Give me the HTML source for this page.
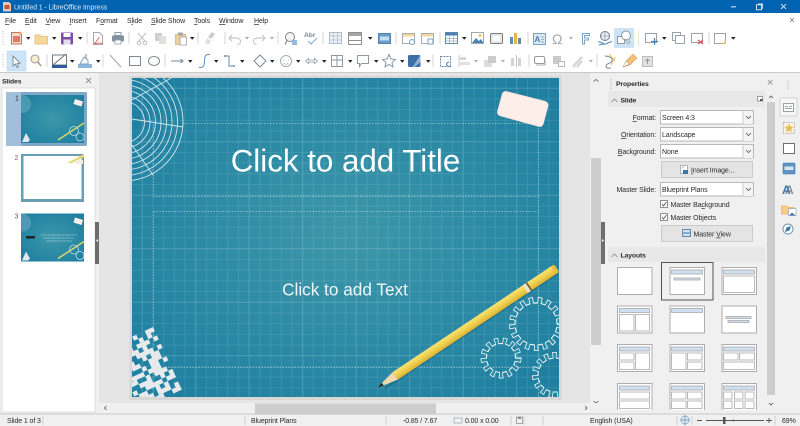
<!DOCTYPE html>
<html><head><meta charset="utf-8"><title>LibreOffice Impress</title>
<style>
html,body{margin:0;padding:0;background:#f0f0f0;width:800px;height:426px;overflow:hidden}
svg{display:block}
text{font-family:"Liberation Sans",sans-serif;font-size:7px;letter-spacing:-.1px;fill:#2a2a2a}
.b{font-weight:bold;font-size:6.8px;letter-spacing:-.1px}
.u{text-decoration:underline}
.ic{fill:none;stroke:#6f7f8c;stroke-width:1}
.g{fill:none;stroke:#b9bfc4;stroke-width:1}
.bl{fill:none;stroke:#3f78a8;stroke-width:1}
.lt{fill:#fff;stroke:#adadad;stroke-width:1}
.lh{fill:#cfe0f2;stroke:#a9a9a9;stroke-width:.8}
.lb{fill:#fff;stroke:#a9a9a9;stroke-width:.8}
.cb{fill:#fff;stroke:#a8a8a8;stroke-width:.8}
</style></head><body>
<svg width="800" height="426" viewBox="0 0 800 426" xmlns="http://www.w3.org/2000/svg">
<defs>
<path id="a" d="M0 0h4.500l-2.250 2.800z" fill="#222"/>
<path id="ag" d="M0 0h4l-2 2.500z" fill="#aaa"/>
<radialGradient id="sbg" cx="50%" cy="50%" r="62%"><stop offset="0" stop-color="#3d97a9"/><stop offset="1" stop-color="#1f80a1"/></radialGradient>
<pattern id="grid" x="132" y="78" width="10.7" height="10.7" patternUnits="userSpaceOnUse"><path d="M10.2 0v10.7M0 10.2h10.7" stroke="#fff" stroke-opacity=".12" stroke-width=".8" fill="none"/></pattern>
<pattern id="gridM" x="132" y="78" width="53.5" height="53.5" patternUnits="userSpaceOnUse"><path d="M10.2 0v53.5M0 10.2h53.5" stroke="#fff" stroke-opacity=".09" stroke-width="1" fill="none"/></pattern>
<clipPath id="sc"><rect x="132" y="78" width="427" height="319"/></clipPath>
<clipPath id="lay"><rect x="608" y="262" width="158" height="148"/></clipPath>
<linearGradient id="pen" x1="0" y1="0" x2="0" y2="1"><stop offset="0" stop-color="#f5e27a"/><stop offset=".45" stop-color="#f2d350"/><stop offset="1" stop-color="#dcb035"/></linearGradient>
<clipPath id="tc"><rect width="63" height="48"/></clipPath>
<g id="thumb"><rect width="63" height="48" fill="url(#sbg)"/><g clip-path="url(#tc)"><circle cx="1" cy="9" r="9" fill="#7fb6c6" opacity=".45"/><path d="M54 4l8 2.500-1.500 5-8-2.500z" fill="#fdeee9"/><path d="M37 45L63 28" stroke="#d9d76a" stroke-width="1.500"/><circle cx="53" cy="36" r="4.500" fill="none" stroke="#bfdde3" stroke-width=".8"/><circle cx="59" cy="42" r="4" fill="none" stroke="#bfdde3" stroke-width=".8"/><circle cx="50" cy="41" r="0" /><path d="M1 47l4-9 4 7-2 2z" fill="#dfe8ea"/></g></g>
</defs>

<!-- window base -->
<rect width="800" height="426" fill="#f0f0f0"/>
<rect width="800" height="13" fill="#0063b1"/>
<rect y="13" width="800" height="59" fill="#fff"/>
<rect y="72" width="800" height="1.2" fill="#c9c9c9"/>

<!-- title bar -->
<path d="M3 2h6l2 2v7.500H3z" fill="#e8c8b8"/><rect x="4.500" y="5" width="5" height="4" fill="#c9552f"/>
<text x="14" y="9.500" style="fill:#dbe8f5">Untitled 1 - LibreOffice Impress</text>
<rect x="731" y="6.400" width="5" height=".9" fill="#fff"/>
<rect x="756.500" y="4.800" width="5" height="5" fill="none" stroke="#fff" stroke-width=".8"/><path d="M758 4h4.700v4.700" fill="none" stroke="#fff" stroke-width=".7"/>
<path d="M781 4l5 5M786 4l-5 5" stroke="#fff" stroke-width=".8"/>

<!-- menu -->
<text x="5" y="23"><tspan class="u">F</tspan>ile</text>
<text x="25" y="23"><tspan class="u">E</tspan>dit</text>
<text x="45.500" y="23"><tspan class="u">V</tspan>iew</text>
<text x="69.500" y="23"><tspan class="u">I</tspan>nsert</text>
<text x="96" y="23">F<tspan class="u">o</tspan>rmat</text>
<text x="127" y="23">S<tspan class="u">l</tspan>ide</text>
<text x="151" y="23"><tspan class="u">S</tspan>lide Show</text>
<text x="194" y="23"><tspan class="u">T</tspan>ools</text>
<text x="219" y="23"><tspan class="u">W</tspan>indow</text>
<text x="254" y="23"><tspan class="u">H</tspan>elp</text>
<path d="M790 18l4 4M794 18l-4 4" stroke="#777" stroke-width=".7"/>

<!-- toolbar grips -->
<path d="M3 31v14M3 54v14" stroke="#bbb" stroke-dasharray="1 1.500"/>

<!-- separators -->
<g stroke="#d5d5d5" stroke-width="1">
<path d="M87 32v12M129 32v12M198 32v12M225 32v12M278 32v12M323 32v12M396 32v12M440 32v12M528 32v12M709 32v12"/>
<path d="M47 54v13M103 54v13M165 54v13M433 54v13M529 54v13M597 54v13"/>
</g>

<!-- toolbar 1 -->
<path d="M11.500 32.500h8l2 2v9.500h-10z" fill="#f4d9cf" stroke="#c9705f"/><rect x="13" y="36" width="7" height="6" fill="#e07a66"/><circle cx="20" cy="33" r="1.400" fill="#e8a33d"/>
<use href="#a" x="26" y="37"/>
<path d="M35 35h5l1.500 1.500h6v7.500h-12.500z" fill="#f3d79c" stroke="#ecc681"/>
<use href="#a" x="52" y="37"/>
<rect x="61" y="32.500" width="12" height="12" rx="1" fill="#7b4fa8"/><rect x="63.500" y="33" width="7" height="4" fill="#fff"/><rect x="63.500" y="39.500" width="7" height="5" fill="#e4dbee"/>
<use href="#a" x="78" y="37"/>
<path d="M93.500 32.500h6l3 3v9h-9z" fill="#fff" stroke="#a5a9ad"/><path d="M99 37c-1 3-3 5-5 7 3-1 6-1 9-.500" fill="none" stroke="#d4705f" stroke-width="1"/>
<path d="M115 32.500h6v3h-6z" fill="#fff" stroke="#8f9ca7"/><rect x="112" y="35.500" width="12" height="6" rx="1" fill="#82919f"/><rect x="115" y="40" width="6" height="4" fill="#fff" stroke="#8f9ca7" stroke-width=".8"/>
<path d="M138 33l7 8M146 33l-7 8" class="g"/><circle cx="139" cy="43" r="1.800" class="g"/><circle cx="145" cy="43" r="1.800" class="g"/>
<rect x="155" y="33" width="7" height="8" fill="#cfcfcf"/><rect x="159" y="36" width="7" height="8" fill="#dfdfdf"/>
<rect x="175.500" y="34.500" width="10" height="10" fill="#ecd09e" stroke="#dcbd8a"/><rect x="178" y="32.500" width="5" height="3" fill="#a5a5a5"/><rect x="180" y="37" width="6.500" height="8" fill="#fff" stroke="#a0a0a0" stroke-width=".8"/>
<use href="#a" x="190" y="37"/>
<path d="M212 32l3 2-4 5-3-2z" fill="#cbcbcb"/><path d="M207 38l4 3-2 3h-4z" fill="#dedede"/>
<path d="M232 35l-3 3 3 3M229.500 38h7c3 0 4 2 4 3.500s-1 3-3 3" class="g" stroke-width="1.200"/>
<use href="#ag" x="245" y="37"/>
<path d="M262 35l3 3-3 3M264.500 38h-7c-3 0-4 2-4 3.500s1 3 3 3" class="g" stroke-width="1.200"/>
<use href="#ag" x="270" y="37"/>
<circle cx="290" cy="37" r="4.500" fill="#f4f4f4" stroke="#858585"/><path d="M287 40.500l-2 4" stroke="#858585" stroke-width="1.200"/><rect x="292" y="40" width="5" height="5" fill="#7dafdc" opacity=".85"/>
<text x="304" y="37" class="b" style="fill:#7b8893">Abr</text><path d="M308 41l3 3 6-6" fill="none" stroke="#8fb2d0" stroke-width="1.200"/>
<rect x="329.500" y="32.500" width="12" height="11" fill="#eef2f6" stroke="#adbdcb"/><path d="M333.500 32.500v11M337.500 32.500v11M329.500 36h12M329.500 40h12" stroke="#adbdcb" stroke-width=".7"/>
<rect x="348.500" y="32.500" width="13" height="12" fill="#fff" stroke="#8f8f8f"/><rect x="349" y="33" width="12" height="3" fill="#a5a5a5"/><path d="M349 40.500h12" stroke="#8f8f8f"/>
<use href="#a" x="368" y="37"/>
<rect x="378.500" y="33.500" width="12" height="10" fill="#6a9cc9" stroke="#5585ae"/><rect x="380" y="36.500" width="9" height="4" fill="#c6dcf0"/>
<rect x="402.500" y="33.500" width="12" height="10" fill="#fff" stroke="#a5aeb6"/><rect x="403" y="34" width="11" height="2.500" fill="#f3d79c"/><circle cx="412" cy="42" r="2.500" fill="#fff" stroke="#7aa2c2"/>
<rect x="421.500" y="33.500" width="12" height="10" fill="#fff" stroke="#a5aeb6"/><rect x="422" y="34" width="11" height="2.500" fill="#f3d79c"/><rect x="428" y="39" width="5" height="5" fill="#fff" stroke="#7aa2c2"/>
<rect x="445.500" y="32.500" width="12" height="11" fill="#fff" stroke="#6b8aa6"/><rect x="445.500" y="32.500" width="12" height="3" fill="#4a83b5"/><path d="M449.500 35v8M453.500 35v8M446 38.500h11M446 41h11" stroke="#98a9b7" stroke-width=".7"/>
<use href="#a" x="462" y="37"/>
<rect x="471.500" y="32.500" width="12" height="11" fill="#fff" stroke="#a0a9b0"/><circle cx="480" cy="35.500" r="1.500" fill="#f2c35c"/><path d="M472 43l4-5 3 3 2-2 2.500 4z" fill="#4a83b5"/>
<rect x="490.500" y="33.500" width="12" height="10" rx="1" fill="#fff" stroke="#7c7c7c"/><rect x="492" y="35" width="9" height="7" fill="none" stroke="#d0d0d0"/>
<rect x="510" y="37" width="3" height="7" fill="#5590bf"/><rect x="514" y="33" width="3" height="11" fill="#e9b44c"/><rect x="518" y="38" width="3" height="6" fill="#6a889f"/>
<rect x="533.500" y="33.500" width="12" height="11" fill="#dbe8f4" stroke="#7aa2c2"/><text x="534.500" y="42" class="b" style="fill:#4a83b5;font-size:8px">A</text><path d="M541 37h3M541 39.500h3M541 42h3" stroke="#7aa2c2" stroke-width=".7"/>
<text x="552" y="44" style="font-size:14px;letter-spacing:0;fill:#a0a8b0">Ω</text>
<use href="#ag" x="569" y="37"/>
<path d="M582.500 33.500h7v2h-5v2.500h4v2h-4v4h-2z" fill="#fff" stroke="#7aa5cb"/>
<circle cx="605" cy="36" r="4.500" fill="#eef2f6" stroke="#6f7f8e"/><path d="M600.500 36h9M605 31.500v9" stroke="#6f7f8e" stroke-width=".6"/><path d="M598 42c3-1 4 2 7 2s4-3 7-2M599 45c3-1 4-1 6-1" fill="none" stroke="#4a83b5" stroke-width="1"/>
<rect x="614" y="28" width="20" height="20" fill="#cde4f7"/>
<rect x="617.500" y="36.500" width="7" height="7" fill="#fff" stroke="#8c99a4"/><circle cx="626" cy="35.500" r="4.500" fill="#fff" stroke="#8c99a4"/><path d="M625 39l3 5 2-2z" fill="#f3f3f3" stroke="#8c99a4" stroke-width=".7"/>
<path d="M638.500 30v16" stroke="#e0d9a0" stroke-dasharray="1 1"/>
<rect x="645.500" y="33.500" width="11" height="9" fill="#fff" stroke="#99a2a9"/><path d="M654.500 38v7M651 41.500h7" stroke="#4a83b5" stroke-width="1.200"/>
<use href="#a" x="662" y="37"/>
<rect x="672.500" y="32.500" width="8" height="8" fill="#fff" stroke="#99a2a9"/><rect x="675.500" y="35.500" width="9" height="8" fill="#fff" stroke="#99a2a9"/>
<rect x="691.500" y="33.500" width="11" height="9" fill="#fff" stroke="#99a2a9"/><path d="M698 40l5 4M703 40l-5 4" stroke="#d8545c" stroke-width="1.200"/>
<rect x="714.500" y="33.500" width="11" height="10" fill="#fff" stroke="#99a2a9"/><path d="M722 44l4-4v4z" fill="#eec06b"/>
<use href="#a" x="731" y="37"/>

<!-- toolbar 2 -->
<rect x="7" y="51" width="19" height="20" fill="#cde4f7" stroke="#b7d7f0" stroke-width=".6"/>
<path d="M13 56v10l2.500-2 1.500 3.500 1.500-.7-1.500-3.300 3.200-.3z" fill="#fff" stroke="#7c8692" stroke-width=".9"/>
<circle cx="35" cy="59" r="4" fill="#f7ecd2" stroke="#9d9d9d"/><path d="M38 62l3 4" stroke="#a88a60" stroke-width="1.400"/>
<path d="M53 65l13-11" stroke="#666" stroke-width=".9"/><rect x="52.500" y="55" width="14" height="10" fill="none" stroke="#6b7a86"/><rect x="52" y="65" width="15" height="3" fill="#2e5a9c"/>
<use href="#a" x="70" y="60"/>
<rect x="78" y="64" width="14" height="4" fill="#8fb6da"/><path d="M80 64l4-7 4 3v4z" fill="#fff" stroke="#7aa2c2"/><path d="M86 54v5" stroke="#7c8692"/>
<use href="#a" x="96" y="60"/>
<path d="M110 55l11 12" stroke="#9ca6af"/>
<rect x="129.500" y="56.500" width="11" height="9" fill="#fff" stroke="#7d8993"/>
<ellipse cx="154" cy="61" rx="5.500" ry="4.500" fill="#fff" stroke="#7d8993"/>
<path d="M171 61h12M180.500 59l2.500 2-2.500 2" fill="none" stroke="#6f899f"/>
<use href="#a" x="188" y="60"/>
<path d="M199 67c1 1 4 1 5-2s0-5 1-8 4-3 5-2" fill="none" stroke="#5f93bd" stroke-width="1"/>
<use href="#a" x="214" y="60"/>
<path d="M225 56h4v10h5" fill="none" stroke="#6f899f"/><circle cx="225" cy="56" r="1" fill="#5f93bd"/><circle cx="234" cy="66" r="1" fill="#5f93bd"/>
<use href="#a" x="240" y="60"/>
<path d="M260 55l6 6-6 6-6-6z" fill="#fff" stroke="#7d8993"/>
<use href="#a" x="270" y="60"/>
<circle cx="286" cy="61" r="5.500" fill="#fff" stroke="#a5aeb5"/><path d="M283 60h1M288 60h1M283.500 63c1.500 1.500 3.500 1.500 5 0" fill="none" stroke="#a5aeb5" stroke-width=".8"/>
<use href="#a" x="296" y="60"/>
<path d="M305.500 61l3-2.500v1.500h6v-1.500l3 2.500-3 2.500v-1.500h-6v1.500z" fill="#fff" stroke="#8c98a2" stroke-width=".8"/>
<use href="#a" x="322" y="60"/>
<rect x="331.500" y="55.500" width="11" height="11" fill="#fff" stroke="#8c98a2"/><path d="M337 55.500v11M331.500 60h11" stroke="#8c98a2"/>
<use href="#a" x="348" y="60"/>
<path d="M357.500 55.500h11v8h-7l-2 3v-3h-2z" fill="#fff" stroke="#8c98a2"/>
<use href="#a" x="374" y="60"/>
<path d="M389 54.500l2 4.500 4.500.5-3.500 3 1 4.500-4-2.500-4 2.500 1-4.500-3.500-3 4.500-.5z" fill="#fff" stroke="#8c98a2"/>
<use href="#a" x="400" y="60"/>
<rect x="408" y="55" width="12.500" height="12" rx="1.500" fill="#3c6ea8"/><path d="M420.500 55v7l-6 5h-2z" fill="#a8c3de" opacity=".8"/>
<use href="#a" x="426" y="60"/>
<rect x="440.500" y="56.500" width="10" height="10" fill="none" stroke="#6f899f" stroke-dasharray="2 1"/><path d="M449 62c-2 0-3 2-2 3.500s3 1.500 4 0" fill="none" stroke="#4a83b5" stroke-width="1.100"/>
<path d="M459 55v12" stroke="#c8c8c8"/><rect x="460" y="57" width="6" height="3" fill="#d6d6d6"/><rect x="460" y="62" width="10" height="3" fill="#e0e0e0"/>
<use href="#ag" x="474" y="60"/>
<rect x="484" y="60" width="8" height="7" fill="#dedede"/><rect x="488" y="56" width="8" height="7" fill="#cbcbcb"/>
<use href="#ag" x="501" y="60"/>
<rect x="511" y="58" width="3" height="8" fill="#d4d4d4"/><rect x="518" y="58" width="3" height="8" fill="#d4d4d4"/><path d="M516.500 55v12" stroke="#c4c4c4"/>
<rect x="534.500" y="56.500" width="10" height="7" rx="1.500" fill="#fff" stroke="#999"/><path d="M536 65h9v-5" fill="none" stroke="#b0b0b0" stroke-width="1.100"/>
<rect x="553" y="56" width="8" height="8" fill="#cbcbcb"/><rect x="558.500" y="61.500" width="6" height="5" fill="#fff" stroke="#b8b8b8"/>
<path d="M572 66l9-10 2 2-9 10z" fill="#d9d9d9"/><path d="M577 67l5-6" stroke="#c8c8c8" stroke-width="1.400"/>
<use href="#ag" x="589" y="60"/>
<path d="M605 56c4 0 8 2 7 5s-6 2-6 5 3 2 5 2" fill="none" stroke="#6f899f"/><path d="M609 54l6 7M615 57l-4 8" stroke="#eec06b" stroke-width="1"/>
<path d="M623 67l3-6 7-7 4 4-7 7z" fill="#eec078" stroke="#d6a65b" stroke-width=".6"/><path d="M623 67l3-6 3 3z" fill="#fff" stroke="#999" stroke-width=".5"/>
<rect x="642.500" y="56.500" width="10" height="10" fill="#e2e2e2" stroke="#bbb"/><path d="M647.500 64v-5M645.500 61l2-2 2 2" fill="none" stroke="#969696"/>

<!-- left slide panel -->
<rect x="0" y="73" width="99" height="341" fill="#f0f0f0"/>
<rect x="2" y="88" width="93" height="324" fill="#fff" stroke="#cfcfcf" stroke-width=".6"/>
<text x="2" y="83.500" class="b">Slides</text>
<path d="M86 78l5 5M91 78l-5 5" stroke="#777" stroke-width=".8"/>
<rect x="6" y="92" width="81" height="54" rx="1" fill="#7fa7c6"/>
<rect x="6" y="92" width="15" height="54" fill="#9fbfdc"/>
<text x="15" y="100.500" style="fill:#333">1</text>
<use href="#thumb" x="21" y="95"/>
<text x="14.500" y="160" style="fill:#8c5b7d">2</text>
<rect x="21" y="154" width="63" height="48" fill="#6a9eb4"/>
<rect x="23.500" y="156" width="58" height="43" fill="#fff"/>
<path d="M67 163l17-9v3l-12 6z" fill="#e6da70"/><rect x="76" y="160" width="7" height="4" fill="#f3ece8"/>
<text x="14.500" y="218.500" style="fill:#555">3</text>
<use href="#thumb" x="21" y="213.500"/>
<rect x="26" y="236" width="9" height="2.500" fill="#222"/>
<path d="M41 235h36M43 238h31M46 241h26" stroke="#e8f2f4" stroke-width=".6" stroke-dasharray="1.500 .7"/>
<rect x="95" y="222" width="4" height="42" fill="#6e6e6e"/><path d="M98 239l-2 1.500 2 1.500z" fill="#fff"/>

<!-- editor -->
<rect x="99" y="73" width="491" height="330" fill="#e5e5e5"/>
<rect x="129.500" y="76" width="432" height="324" fill="#c8c5c0" opacity=".45"/>
<rect x="132" y="78" width="427" height="319" fill="url(#sbg)"/>
<rect x="132" y="78" width="427" height="319" fill="url(#grid)"/>
<rect x="132" y="78" width="427" height="319" fill="url(#gridM)"/>
<g clip-path="url(#sc)">
<g fill="none" stroke="#d0e7ed" stroke-width=".9">
<circle cx="124" cy="122" r="59"/><circle cx="124" cy="122" r="53.500"/><circle cx="124" cy="122" r="48"/><circle cx="124" cy="122" r="42.500"/><circle cx="124" cy="122" r="37"/><circle cx="124" cy="122" r="31.500"/><circle cx="124" cy="122" r="26"/><circle cx="124" cy="122" r="20.500"/>
<path d="M132 119l51 8M132 100l41-23M132 145l21 30"/>
</g>
<g fill="none" stroke="#e4eef1" stroke-opacity=".65" stroke-width=".7" stroke-dasharray="1.500 1.500">
<path d="M183 123.500h355.500V397M153.500 124v72.500h385M153.500 211.500h385M153.500 211.500V397M153.500 367.500h385"/>
</g>
<!-- QR block -->
<g transform="translate(153 327) rotate(-24.7) translate(-46 0) scale(4.600)" fill="#e6eaec">
<path d="M5 0h1v1h-1zM8 0h2v1h-2zM3 1h1v1h-1zM6 1h1v1h-1zM8 1h1v1h-1zM1 2h3v1h-3zM5 2h3v1h-3zM9 2h1v1h-1zM0 3h2v1h-2zM3 3h2v1h-2zM6 3h1v1h-1zM1 4h1v1h-1zM4 4h4v1h-4zM9 4h1v1h-1zM0 5h3v1h-3zM5 5h1v1h-1zM7 5h2v1h-2zM2 6h2v1h-2zM6 6h3v1h-3zM0 7h1v1h-1zM4 7h1v1h-1zM6 7h2v1h-2zM9 7h1v1h-1zM1 8h3v1h-3zM5 8h3v1h-3zM0 9h2v1h-2zM4 9h1v1h-1zM6 9h3v1h-3zM2 10h3v1h-3zM7 10h1v1h-1zM9 10h1v1h-1zM0 11h1v1h-1zM3 11h4v1h-4zM8 11h2v1h-2zM1 12h2v1h-2zM5 12h1v1h-1zM7 12h1v1h-1zM0 13h4v1h-4zM5 13h3v1h-3zM9 13h1v1h-1zM2 14h1v1h-1zM4 14h2v1h-2zM8 14h2v1h-2z"/>
</g>
<!-- gears -->
<g fill="none">
<g transform="translate(536 324)">
<circle r="24" pathLength="34" stroke="#fff" stroke-width="6" stroke-dasharray="1 1"/>
<circle r="23.400" pathLength="34" stroke="#2a8aa3" stroke-width="5.800" stroke-dasharray=".65 1.350" stroke-dashoffset="-.175"/>
<circle r="21" pathLength="34" stroke="#fff" stroke-width="1" stroke-dasharray="1.250 .750" stroke-dashoffset="-.875"/>
</g>
<g transform="translate(501 358)">
<circle r="17.500" pathLength="26" stroke="#fff" stroke-width="6" stroke-dasharray="1 1"/>
<circle r="16.900" pathLength="26" stroke="#2a8aa3" stroke-width="5.800" stroke-dasharray=".65 1.350" stroke-dashoffset="-.175"/>
<circle r="14.500" pathLength="26" stroke="#fff" stroke-width="1" stroke-dasharray="1.250 .750" stroke-dashoffset="-.875"/>
</g>
<g transform="translate(555 375)">
<circle r="20" pathLength="30" stroke="#fff" stroke-width="6" stroke-dasharray="1 1"/>
<circle r="19.400" pathLength="30" stroke="#2a8aa3" stroke-width="5.800" stroke-dasharray=".65 1.350" stroke-dashoffset="-.175"/>
<circle r="17" pathLength="30" stroke="#fff" stroke-width="1" stroke-dasharray="1.250 .750" stroke-dashoffset="-.875"/>
</g>
</g>
<!-- pencil -->
<g transform="translate(377 388) rotate(-33.700)">
<rect x="6" y="3.500" width="208" height="2.500" fill="#0a3a50" opacity=".25"/>
<path d="M0 0L22-4.600V4.600z" fill="#efd9ae"/>
<path d="M0 0l7-1.500v3z" fill="#222"/>
<rect x="22" y="-4.600" width="192" height="9.200" fill="url(#pen)"/>
<rect x="178" y="-4.600" width="4" height="9.200" fill="#e8e3c8"/>
<rect x="182" y="-4.600" width="1.500" height="9.200" fill="#6b5324"/>
<rect x="212" y="-4.600" width="4" height="9.200" rx="2" fill="#e6bf3f"/>
</g>
<!-- eraser -->
<path d="M507 91.500l37.500 9.500q4.500 1.200 3.500 5.500l-4.500 17q-1.200 4-5 3l-38-10.500q-4-1.200-3-5l4.500-16.500q1-4 5-3z" fill="#fdeee9" stroke="#e8d5d0" stroke-width=".5"/>
</g>
<text x="345.500" y="171.500" text-anchor="middle" style="font-size:31.300px;letter-spacing:0;fill:#fff">Click to add Title</text>
<text x="345" y="295.500" text-anchor="middle" style="font-size:17.200px;letter-spacing:0;fill:#eef6f8">Click to add Text</text>

<!-- v scrollbar -->
<rect x="590" y="73" width="11" height="330" fill="#f0f0f0"/>
<rect x="591" y="158" width="10" height="187" fill="#cdcdcd"/>
<path d="M593.500 81.500l2.500-2 2.500 2M593.500 401l2.500 2 2.500-2" fill="none" stroke="#555" stroke-width=".8"/>
<rect x="601" y="222" width="4" height="42" fill="#6e6e6e"/><path d="M602 239l2 1.500-2 1.500z" fill="#fff"/>
<!-- h scrollbar -->
<rect x="99" y="403" width="502" height="10.500" fill="#f0f0f0"/>
<rect x="255" y="403.500" width="181" height="10" fill="#cdcdcd"/>
<path d="M106.500 406l-2 2 2 2M585 406l2 2-2 2" fill="none" stroke="#555" stroke-width=".8"/>

<!-- status bar -->
<rect y="413.500" width="800" height="1" fill="#c9c9c9"/>
<rect y="414.500" width="800" height="11.500" fill="#f0f0f0"/>
<g stroke="#cfcfcf"><path d="M43 416v9M245 416v9M386 416v9M511 416v9M524 416v9M543 416v9M677 416v9M692 416v9M775 416v9"/></g>
<text x="7" y="423">Slide 1 of 3</text>
<text x="251" y="423">Blueprint Plans</text>
<text x="403" y="423">-0.85 / 7.67</text>
<path d="M454 418h8v5h-8z" fill="none" stroke="#9ba8b2" stroke-width=".7"/>
<text x="465" y="423">0.00 x 0.00</text>
<rect x="516.500" y="417" width="6" height="6.500" fill="none" stroke="#8a8a8a" stroke-width=".7"/><rect x="518" y="417" width="3" height="2" fill="#8a8a8a"/>
<text x="590" y="423">English (USA)</text>
<circle cx="685" cy="420" r="4" fill="#e4eef6" stroke="#7fa7c6" stroke-width=".7"/><path d="M680 420h10M685 415v10" stroke="#5d8db5" stroke-width=".7"/>
<path d="M697 420.500h5M706 420.500h58M766 420.500h6M769 418v5" stroke="#555" stroke-width=".9"/>
<rect x="723" y="417" width="2.500" height="7" fill="#555"/><rect x="733" y="419.500" width="1" height="2" fill="#555"/>
<text x="782" y="423">69%</text>

<!-- properties deck -->
<rect x="605" y="73" width="172" height="340.500" fill="#f0f0f0"/>
<path d="M611 79v11" stroke="#aaa" stroke-dasharray="1 1.300"/>
<text x="616" y="86" class="b">Properties</text>
<path d="M768 80l4.500 4.500M772.500 80l-4.500 4.500" stroke="#888" stroke-width=".8"/>
<rect x="608" y="91" width="157" height="16" fill="#e8e8e8"/>
<rect x="767" y="91" width="8" height="322" fill="#f0f0f0"/>
<rect x="767" y="102" width="8" height="293" fill="#cdcdcd"/>
<path d="M769 98l2-2 2 2M769 403l2 2 2-2" fill="none" stroke="#555" stroke-width=".8"/>
<path d="M611.500 102l3-3 3 3" fill="none" stroke="#888" stroke-width=".8"/>
<text x="620.500" y="102.500" class="b">Slide</text>
<rect x="757.500" y="96.500" width="5" height="4.500" fill="#fff" stroke="#777" stroke-width=".7"/><rect x="760" y="99" width="2.500" height="2" fill="#555"/>

<text x="656" y="120" text-anchor="end"><tspan class="u">F</tspan>ormat:</text>
<rect x="660.500" y="110.500" width="93" height="13.500" class="cb"/><rect x="743" y="111" width="10" height="13" fill="#f4f4f4"/><path d="M743 110.500v13.500" stroke="#ccc"/><path d="M746 116l2.500 2.500 2.500-2.500" fill="none" stroke="#555" stroke-width=".8"/>
<text x="662" y="120">Screen 4:3</text>

<text x="656" y="137" text-anchor="end"><tspan class="u">O</tspan>rientation:</text>
<rect x="660.500" y="127.500" width="93" height="13.500" class="cb"/><rect x="743" y="128" width="10" height="13" fill="#f4f4f4"/><path d="M743 127.500v13.500" stroke="#ccc"/><path d="M746 133l2.500 2.500 2.500-2.500" fill="none" stroke="#555" stroke-width=".8"/>
<text x="662" y="137">Landscape</text>

<text x="656" y="154" text-anchor="end"><tspan class="u">B</tspan>ackground:</text>
<rect x="660.500" y="144.500" width="93" height="13.500" class="cb"/><rect x="743" y="145" width="10" height="13" fill="#f4f4f4"/><path d="M743 144.500v13.500" stroke="#ccc"/><path d="M746 150l2.500 2.500 2.500-2.500" fill="none" stroke="#555" stroke-width=".8"/>
<text x="662" y="154">None</text>

<rect x="661.500" y="161.500" width="91" height="16" fill="#e4e4e4" stroke="#c4c4c4" stroke-width=".8"/>
<rect x="680.500" y="165.500" width="7" height="8" fill="#fff" stroke="#8a9aa8" stroke-width=".7"/><rect x="683" y="170" width="5" height="4" fill="#3f78a8"/><circle cx="683" cy="167.500" r="1" fill="#eec06b"/>
<text x="691" y="172.500"><tspan class="u">I</tspan>nsert Image...</text>

<text x="656" y="192" text-anchor="end">Master Slide:</text>
<rect x="660.500" y="182.500" width="93" height="13.500" class="cb"/><rect x="743" y="183" width="10" height="13" fill="#f4f4f4"/><path d="M743 182.500v13.500" stroke="#ccc"/><path d="M746 188l2.500 2.500 2.500-2.500" fill="none" stroke="#555" stroke-width=".8"/>
<text x="662" y="192">Blueprint Plans</text>

<rect x="660.500" y="200.500" width="7" height="7" fill="#fff" stroke="#777" stroke-width=".8"/><path d="M662 204l1.500 2 3-4" fill="none" stroke="#444" stroke-width=".8"/>
<text x="670.500" y="207">Master Ba<tspan class="u">c</tspan>kground</text>
<rect x="660.500" y="213.500" width="7" height="7" fill="#fff" stroke="#777" stroke-width=".8"/><path d="M662 217l1.500 2 3-4" fill="none" stroke="#444" stroke-width=".8"/>
<text x="670.500" y="220">Master Objects</text>

<rect x="661.500" y="225.500" width="91" height="16" fill="#e4e4e4" stroke="#c4c4c4" stroke-width=".8"/>
<rect x="682.500" y="229.500" width="8" height="7" fill="#cfe0f0" stroke="#3f78a8" stroke-width=".8"/><path d="M683 233h7" stroke="#3f78a8"/>
<text x="693.500" y="236.500">Master <tspan class="u">V</tspan>iew</text>

<!-- layouts -->
<rect x="608" y="247" width="157" height="15" fill="#e8e8e8"/>
<path d="M611.500 257l3-3 3 3" fill="none" stroke="#888" stroke-width=".8"/>
<text x="620.500" y="257.500" class="b">Layouts</text>
<rect x="661.500" y="262.500" width="51.500" height="37.500" fill="#f0f0f0" stroke="#444" stroke-width=".9"/>
<g clip-path="url(#lay)">
<!-- row 1 -->
<rect x="617.500" y="267.500" width="34.500" height="27" class="lt"/>
<rect x="670" y="267.500" width="34.500" height="27" class="lt"/><rect x="671.500" y="270" width="31" height="4" class="lh"/><rect x="674" y="278" width="26" height="2" class="lh"/>
<rect x="722" y="267.500" width="34.500" height="27" class="lt"/><rect x="723.500" y="270" width="31" height="4" class="lh"/><rect x="723.500" y="276" width="31" height="16.500" class="lb"/>
<!-- row 2 -->
<rect x="617.500" y="306" width="34.500" height="27" class="lt"/><rect x="619.500" y="308.500" width="30" height="4" class="lh"/><rect x="619.500" y="314.500" width="14.500" height="16.500" class="lb"/><rect x="635.500" y="314.500" width="14" height="16.500" class="lb"/>
<rect x="670" y="306" width="34.500" height="27" class="lt"/><rect x="671.500" y="308.500" width="31" height="4" class="lh"/>
<rect x="722" y="306" width="34.500" height="27" class="lt"/><rect x="726" y="316.500" width="25" height="2" class="lh"/><rect x="728" y="320.500" width="21" height="2" class="lh"/>
<!-- row 3 -->
<rect x="617.500" y="344.500" width="34.500" height="27" class="lt"/><rect x="619.500" y="347" width="30" height="4" class="lh"/><rect x="619.500" y="353" width="14.500" height="7" class="lb"/><rect x="619.500" y="362" width="14.500" height="7.500" class="lb"/><rect x="635.500" y="353" width="14" height="16.500" class="lb"/>
<rect x="670" y="344.500" width="34.500" height="27" class="lt"/><rect x="671.500" y="347" width="31" height="4" class="lh"/><rect x="671.500" y="353" width="14.500" height="16.500" class="lb"/><rect x="687.500" y="353" width="14.500" height="7" class="lb"/><rect x="687.500" y="362" width="14.500" height="7.500" class="lb"/>
<rect x="722" y="344.500" width="34.500" height="27" class="lt"/><rect x="723.500" y="347" width="31" height="4" class="lh"/><rect x="723.500" y="353" width="14.500" height="7" class="lb"/><rect x="739.500" y="353" width="15" height="7" class="lb"/><rect x="723.500" y="362" width="31" height="7.500" class="lb"/>
<!-- row 4 -->
<rect x="617.500" y="383.500" width="34.500" height="27" class="lt"/><rect x="619.500" y="386" width="30" height="4" class="lh"/><rect x="619.500" y="392" width="30" height="7" class="lb"/><rect x="619.500" y="401" width="30" height="7.500" class="lb"/>
<rect x="670" y="383.500" width="34.500" height="27" class="lt"/><rect x="671.500" y="386" width="31" height="4" class="lh"/><rect x="671.500" y="392" width="14.500" height="7" class="lb"/><rect x="687.500" y="392" width="14.500" height="7" class="lb"/><rect x="671.500" y="401" width="14.500" height="7.500" class="lb"/><rect x="687.500" y="401" width="14.500" height="7.500" class="lb"/>
<rect x="722" y="383.500" width="34.500" height="27" class="lt"/><rect x="723.500" y="386" width="31" height="4" class="lh"/><rect x="723.500" y="392" width="8.500" height="7" class="lb"/><rect x="734.500" y="392" width="8.500" height="7" class="lb"/><rect x="745" y="392" width="9" height="7" class="lb"/><rect x="723.500" y="401" width="8.500" height="7.500" class="lb"/><rect x="734.500" y="401" width="8.500" height="7.500" class="lb"/><rect x="745" y="401" width="9" height="7.500" class="lb"/>
</g>

<!-- right tab bar -->
<rect x="777" y="73" width="23" height="340.500" fill="#f0f0f0"/>
<path d="M788 81v9" stroke="#aaa" stroke-dasharray="1 1.300"/>
<rect x="780" y="98" width="17" height="18" rx="1" fill="#f6f6f6" stroke="#c9c9c9" stroke-width=".7"/>
<rect x="783.500" y="103.500" width="10" height="8" fill="#fff" stroke="#7f8a93" stroke-width=".8"/><path d="M785 106.500h3M789 106.500h3M785 108.500h7" stroke="#8a8a8a" stroke-width=".7"/>
<rect x="783.500" y="122.500" width="11" height="11" fill="#f7f3e0" stroke="#9aa4ac" stroke-dasharray="1.500 1" stroke-width=".8"/><path d="M789 123.500l1.500 3 3 .4-2.200 2.200.6 3-2.900-1.500-2.900 1.500.6-3-2.200-2.200 3-.4z" fill="#e6bf5c"/>
<rect x="783.500" y="143.500" width="11" height="10" fill="#fff" stroke="#4d4d4d" stroke-width=".8"/>
<rect x="783" y="163" width="12" height="11" rx="1" fill="#5f93c4" stroke="#3f78a8" stroke-width=".6"/><rect x="784.500" y="166.500" width="9" height="3.500" fill="#d6e6f4"/>
<text x="782" y="194" class="b" style="font-size:12px;letter-spacing:0;fill:#3f78a8">A</text><text x="785" y="194" class="b" style="font-size:12px;letter-spacing:0;fill:#5d6f80;opacity:.75">A</text>
<path d="M781.500 206h5l1.500 1.500h6v6.500h-12.500z" fill="#f3cf85" stroke="#e6b35c" stroke-width=".7"/><rect x="788.500" y="208.500" width="7.500" height="7" fill="#fff" stroke="#8a9aa8" stroke-width=".6"/><path d="M789 215.500l3-3 3.500 3z" fill="#3f78a8"/>
<circle cx="788" cy="229" r="5" fill="#fff" stroke="#6f8fae" stroke-width=".9"/><path d="M791 226l-4.500 1.500-1.500 4.500 4.500-1.500z" fill="#3f78a8"/>
</svg>
</body></html>
